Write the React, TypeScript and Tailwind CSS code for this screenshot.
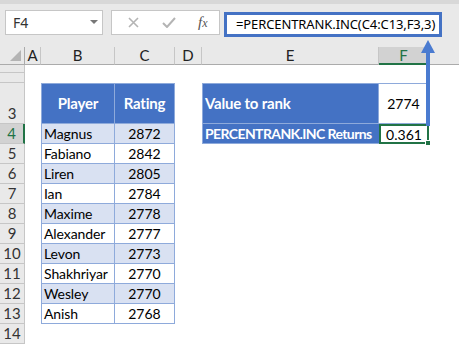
import React from "react";

const players: [string, number][] = [
  ["Magnus", 2872],
  ["Fabiano", 2842],
  ["Liren", 2805],
  ["Ian", 2784],
  ["Maxime", 2778],
  ["Alexander", 2777],
  ["Levon", 2773],
  ["Shakhriyar", 2770],
  ["Wesley", 2770],
  ["Anish", 2768],
];

const sheetFont = { fontFamily: "Lato, 'Open Sans', sans-serif" };
const uiFont = { fontFamily: "'Noto Sans', 'Open Sans', sans-serif" };

function RowHeader({ n, selected }: { n: number | null; selected?: boolean }) {
  if (selected) {
    return (
      <div className="bg-[#d2d2d2] border-b border-[#c6c6c6] border-r-2 border-r-[#217346] flex items-end justify-center text-[15px] leading-[19px] text-[#217346]">
        {n}
      </div>
    );
  }
  return (
    <div className="bg-[#e9e9e9] border-b border-r border-[#c6c6c6] flex items-end justify-center text-[15px] leading-[19px] text-[#333]">
      {n}
    </div>
  );
}

export default function App() {
  const rows = [];
  for (const r of [1, 2]) {
    rows.push(
      <React.Fragment key={"r" + r}>
        <RowHeader n={null} />
        <div />
        <div />
        <div />
        <div />
        <div />
        <div />
        <div />
      </React.Fragment>
    );
  }
  rows.push(
    <React.Fragment key="r3">
      <RowHeader n={3} />
      <div />
      <div className="bg-[#4472c4] border border-[#8eaadb] flex items-center justify-center text-white font-bold text-[15px] tracking-[-0.2px]">
        Player
      </div>
      <div className="bg-[#4472c4] border-t border-r border-b border-[#8eaadb] flex items-center justify-center text-white font-bold text-[15px] tracking-[-0.2px]">
        Rating
      </div>
      <div />
      <div className="bg-[#4472c4] border border-[#8eaadb] flex items-center pl-[2px] text-white font-bold text-[15px] tracking-[-0.2px]">
        Value to rank
      </div>
      <div className="bg-white border-t border-r border-b border-[#8eaadb] flex items-center justify-center text-[14px]">
        2774
      </div>
      <div />
    </React.Fragment>
  );
  players.forEach(([name, rating], i) => {
    const r = i + 4;
    const band = i % 2 === 0;
    rows.push(
      <React.Fragment key={"r" + r}>
        <RowHeader n={r} selected={r === 4} />
        <div />
        <div
          className={
            (band ? "bg-[#d9e1f2] " : "bg-white ") +
            "border-l border-r border-b border-[#8eaadb] flex items-end pl-[2px] text-[14px] leading-[19px] tracking-[-0.1px] whitespace-nowrap overflow-hidden"
          }
        >
          {name}
        </div>
        <div
          className={
            (band ? "bg-[#d9e1f2] " : "bg-white ") +
            "border-r border-b border-[#8eaadb] flex items-end justify-center text-[14px] leading-[19px]"
          }
        >
          {rating}
        </div>
        <div />
        {r === 4 ? (
          <div className="bg-[#4472c4] border-l border-b border-[#8eaadb] flex items-end pl-[2px] text-white font-bold text-[14px] leading-[19px] tracking-[-0.6px] whitespace-nowrap overflow-hidden">
            PERCENTRANK.INC Returns
          </div>
        ) : (
          <div />
        )}
        {r === 4 ? (
          <div className="relative border-2 border-[#217346] flex items-center justify-center text-[14px]">
            0.361
            <div className="absolute right-[-4px] bottom-[-4px] w-[6px] h-[6px] bg-[#217346] border border-white" />
          </div>
        ) : (
          <div />
        )}
        <div />
      </React.Fragment>
    );
  });
  rows.push(
    <React.Fragment key="r14">
      <RowHeader n={14} />
      <div />
      <div />
      <div />
      <div />
      <div />
      <div />
      <div />
    </React.Fragment>
  );

  const colHeader = (label: string, selected?: boolean) =>
    selected ? (
      <div className="bg-[#d2d2d2] border-r border-[#c6c6c6] border-b-2 border-b-[#217346] flex items-center justify-center text-[15px] text-[#217346]">
        {label}
      </div>
    ) : (
      <div className="bg-[#e9e9e9] border-r border-b border-[#c6c6c6] border-b-[#ababab] flex items-center justify-center text-[15px] text-[#222]">
        {label}
      </div>
    );

  return (
    <div className="relative w-[459px] h-[345px] overflow-hidden bg-white text-black">
      <div className="h-[47px] bg-[#e9e9e9] border-t-[4px] border-[#d8d8d8] flex items-start pt-[6px] pl-[5px]" style={uiFont}>
        <div className="w-[98px] h-[25px] bg-white border border-[#c6c6c6] flex items-center justify-between pl-[7px] pr-[4px] text-[14px] text-[#333]">
          <span>F4</span>
          <svg width="8" height="5" viewBox="0 0 8 5">
            <polygon points="0,0 8,0 4,4" fill="#777" />
          </svg>
        </div>
        <div className="ml-[8px] w-[109px] h-[25px] bg-white border border-[#c6c6c6] flex items-center">
          <svg className="ml-[16px]" width="11" height="11" viewBox="0 0 11 11">
            <path d="M1 1 L10 10 M10 1 L1 10" stroke="#b4b4b4" strokeWidth="1.6" />
          </svg>
          <svg className="ml-[23px]" width="14" height="11" viewBox="0 0 14 11">
            <path d="M1 6 L5 10 L13 1" stroke="#b4b4b4" strokeWidth="2" fill="none" />
          </svg>
          <span className="ml-[22px] text-[15px] italic text-[#555]" style={{ fontFamily: "'Liberation Serif', serif" }}>
            f<span className="text-[12px]">x</span>
          </span>
        </div>
        <div className="ml-[4px] mt-[2px] w-[218px] h-[25px] bg-white border-[3px] border-[#4472c4] flex items-center pl-[9px] text-[13px] tracking-[-0.1px] text-black whitespace-nowrap overflow-hidden">
          =PERCENTRANK.INC(C4:C13,F3,3)
        </div>
      </div>

      <div
        className="grid grid-cols-[25px_16px_74px_60px_27px_177px_50px_1fr] grid-rows-[18px_8px_10px_41px_repeat(11,20px)]"
        style={sheetFont}
      >
        <div className="bg-[#e9e9e9] border-r border-b border-[#ababab] relative">
          <svg className="absolute right-[3px] bottom-[3px]" width="11" height="11" viewBox="0 0 11 11">
            <polygon points="11,0 11,11 0,11" fill="#b4b4b4" />
          </svg>
        </div>
        {colHeader("A")}
        {colHeader("B")}
        {colHeader("C")}
        {colHeader("D")}
        {colHeader("E")}
        {colHeader("F", true)}
        <div className="bg-[#e9e9e9] border-b border-[#ababab]" />
        {rows}
      </div>

      <svg className="absolute left-[419px] top-[38px]" width="18" height="90" viewBox="0 0 18 90">
        <polygon points="9,2 16,15 2,15" fill="#4a7bd0" />
        <rect x="7" y="14" width="4" height="74" fill="#4a7bd0" />
      </svg>
    </div>
  );
}
